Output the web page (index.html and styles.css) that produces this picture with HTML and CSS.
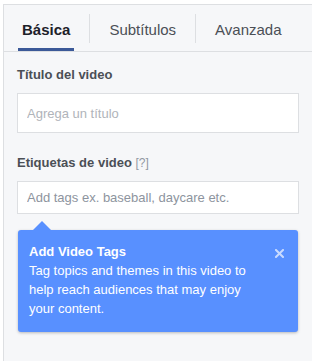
FILE: index.html
```html
<!DOCTYPE html>
<html>
<head>
  <title>Video Settings</title>
  <link rel="stylesheet" href="styles.css">
</head>
<body>
  <div class="panel">
    <div class="tabs">
      <div class="tab active">Básica</div>
      <div class="tab-sep"></div>
      <div class="tab">Subtítulos</div>
      <div class="tab-sep"></div>
      <div class="tab">Avanzada</div>
    </div>

    <div class="form">
      <label for="video-title">Título del video</label>
      <input type="text" id="video-title" class="title-input" placeholder="Agrega un título">

      <label for="video-tags" class="tags-label">Etiquetas de video <span class="help">[?]</span></label>
      <input type="text" id="video-tags" class="tags-input" placeholder="Add tags ex. baseball, daycare etc.">

      <div class="tip">
        <div class="tip-text">
          <div class="tip-title">Add Video Tags</div>
          Tag topics and themes in this video to help reach audiences that may enjoy your content.
        </div>
        <button class="tip-close" aria-label="Cerrar">
          <svg width="9" height="9" viewBox="0 0 9 9">
            <path d="M1 1L8 8M8 1L1 8" stroke="currentColor" stroke-width="2" stroke-linecap="square"/>
          </svg>
        </button>
      </div>
    </div>
  </div>
</body>
</html>
```

FILE: styles.css
```css
html, body {
  margin: 0;
  height: 100%;
  background-color: #fff;
}

body {
  font-family: "Liberation Sans", Arial, sans-serif;
  color: #4b4f56;
}

.panel {
  box-sizing: border-box;
  min-height: calc(100% - 4px);
  margin: 4px 0 0 3px;
  background-color: #f6f7f9;
  border-top: 1px solid #dddfe2;
  border-left: 1px solid #dddfe2;
}

.tabs {
  display: flex;
  padding-left: 14px;
  border-bottom: 1px solid #dddfe2;
}

.tab {
  padding: 15px 4px 8px;
  font-size: 15px;
  line-height: 20px;
  color: #4b4f56;
  border-bottom: 3px solid transparent;
}

.tab.active {
  font-weight: bold;
  color: #1d2129;
  border-bottom-color: #3b5998;
}

.tab-sep {
  align-self: center;
  width: 1px;
  height: 29px;
  margin: 0 15px;
  background-color: #dddfe2;
}

.form {
  padding: 15px 13px 0;
}

label {
  display: block;
  margin-bottom: 10px;
  font-size: 13px;
  line-height: 16px;
  font-weight: bold;
  color: #4b4f56;
}

.tags-label {
  margin-top: 22px;
}

.help {
  font-weight: normal;
  font-size: 12px;
  color: #9197a3;
}

input[type="text"] {
  display: block;
  box-sizing: border-box;
  width: 100%;
  margin: 0;
  padding: 0 9px;
  font-family: "Liberation Sans", Arial, sans-serif;
  font-size: 13px;
  background-color: #fff;
  border: 1px solid #dddfe2;
  border-radius: 0;
  outline: none;
}

.title-input {
  height: 40px;
}

.title-input::placeholder {
  color: #b0b4ba;
}

.tags-input {
  height: 33px;
}

.tags-input::placeholder {
  color: #8d949e;
}

.tip {
  position: relative;
  display: flex;
  align-items: flex-start;
  margin: 16px 1px 0;
  padding: 12px 14px 14px 11px;
  background-color: #5890ff;
  border-radius: 3px;
  box-shadow: 0 1px 3px rgba(0, 0, 0, 0.25);
  color: #fff;
  font-size: 13px;
  line-height: 19px;
}

/* little arrow pointing at the tags field */
.tip::before {
  content: "";
  position: absolute;
  top: -9px;
  left: 15px;
  border-left: 9px solid transparent;
  border-right: 9px solid transparent;
  border-bottom: 9px solid #5890ff;
}

.tip-text {
  flex: 1;
}

.tip-title {
  font-weight: bold;
}

.tip-close {
  display: block;
  margin: 7px 0 0 14px;
  padding: 0;
  width: 9px;
  height: 9px;
  border: none;
  background: none;
  color: #c9dbff;
  cursor: pointer;
}

.tip-close svg {
  display: block;
}
```
